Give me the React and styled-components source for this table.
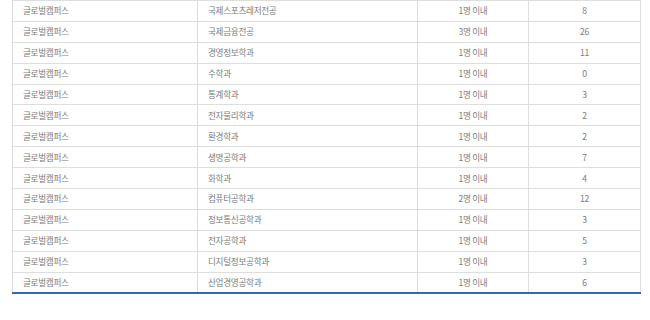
import styled, { createGlobalStyle } from "styled-components";

const GlobalStyle = createGlobalStyle`
  html, body {
    margin: 0;
    padding: 0;
    background: #fff;
  }
  body {
    font-family: "Noto Sans CJK KR", "Noto Sans", sans-serif;
  }
`;

const Wrap = styled.div`
  width: 650px;
  height: 320px;
  padding-left: 12px;
  box-sizing: border-box;
  overflow: hidden;
`;

const Table = styled.table`
  width: 628px;
  border-collapse: collapse;
  table-layout: fixed;
  border-bottom: 2px solid #3566ba;
`;

const Col = styled.col`
  width: ${(p) => p.$w}px;
`;

const Row = styled.tr`
  height: 20.9px;
`;

const Cell = styled.td`
  border: 1px solid #dedede;
  padding: 0 0 0 ${(p) => (p.$center ? 0 : 10)}px;
  text-align: ${(p) => (p.$center ? "center" : "left")};
  font-size: 8.6px;
  line-height: 19px;
  color: #7c7c7c;
  white-space: nowrap;
  letter-spacing: -0.3px;
`;

const rows = [
  ["국제스포츠레저전공", "1명 이내", "8"],
  ["국제금융전공", "3명 이내", "26"],
  ["경영정보학과", "1명 이내", "11"],
  ["수학과", "1명 이내", "0"],
  ["통계학과", "1명 이내", "3"],
  ["전자물리학과", "1명 이내", "2"],
  ["환경학과", "1명 이내", "2"],
  ["생명공학과", "1명 이내", "7"],
  ["화학과", "1명 이내", "4"],
  ["컴퓨터공학과", "2명 이내", "12"],
  ["정보통신공학과", "1명 이내", "3"],
  ["전자공학과", "1명 이내", "5"],
  ["디지털정보공학과", "1명 이내", "3"],
  ["산업경영공학과", "1명 이내", "6"],
];

const App = () => {
  return (
    <>
      <GlobalStyle />
      <Wrap>
        <Table>
          <colgroup>
            <Col $w={185} />
            <Col $w={220} />
            <Col $w={111} />
            <Col $w={112} />
          </colgroup>
          <tbody>
            {rows.map(([major, quota, count]) => (
              <Row key={major}>
                <Cell>글로벌캠퍼스</Cell>
                <Cell>{major}</Cell>
                <Cell $center>{quota}</Cell>
                <Cell $center>{count}</Cell>
              </Row>
            ))}
          </tbody>
        </Table>
      </Wrap>
    </>
  );
};

export default App;
